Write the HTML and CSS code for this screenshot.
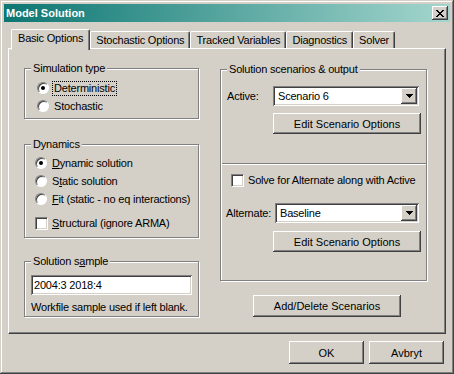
FILE: index.html
```html
<!DOCTYPE html>
<html>
<head>
    <title>Model Solution</title>
    <link rel="stylesheet" href="styles.css">
</head>
<body>
    <div class="window">
        <div class="titlebar">
            <span class="title">Model Solution</span>
            <span class="close">
                <svg width="8" height="7" viewBox="0 0 8 7" shape-rendering="crispEdges">
                    <path d="M0 0h2v1H0zM6 0h2v1H6zM1 1h2v1H1zM5 1h2v1H5zM2 2h4v1H2zM3 3h2v1H3zM2 4h4v1H2zM1 5h2v1H1zM5 5h2v1H5zM0 6h2v1H0zM6 6h2v1H6z" fill="#000"/>
                </svg>
            </span>
        </div>

        <div class="tabs">
            <div class="tab active">Basic Options</div>
            <div class="tab">Stochastic Options</div>
            <div class="tab">Tracked Variables</div>
            <div class="tab">Diagnostics</div>
            <div class="tab">Solver</div>
        </div>

        <div class="panel">
            <div class="col-left">
                <div class="group sim">
                    <span class="group-label">Simulation type</span>
                    <div class="opt"><span class="radio on"></span><span class="focus">Deterministic</span></div>
                    <div class="opt"><span class="radio"></span><span>Stochastic</span></div>
                </div>

                <div class="group dyn">
                    <span class="group-label">Dynamics</span>
                    <div class="opt"><span class="radio on"></span><span><u>D</u>ynamic solution</span></div>
                    <div class="opt"><span class="radio"></span><span>S<u>t</u>atic solution</span></div>
                    <div class="opt"><span class="radio"></span><span><u>F</u>it (static - no eq interactions)</span></div>
                    <div class="opt opt-check"><span class="check"></span><span><u>S</u>tructural (ignore ARMA)</span></div>
                </div>

                <div class="group sample">
                    <span class="group-label">Solution s<u>a</u>mple</span>
                    <div class="textbox">2004:3 2018:4</div>
                    <div class="hint">Workfile sample used if left blank.</div>
                </div>
            </div>

            <div class="col-right">
                <div class="group scen">
                    <span class="group-label">Solution scenarios &amp; output</span>
                    <div class="field-row active-row">
                        <span class="field-label">Active:</span>
                        <div class="combo">
                            <span class="combo-text">Scenario 6</span>
                            <span class="combo-arrow">
                                <svg width="7" height="4" viewBox="0 0 7 4" shape-rendering="crispEdges"><path d="M0 0h7v1H0zM1 1h5v1H1zM2 2h3v1H2zM3 3h1v1H3z" fill="#000"/></svg>
                            </span>
                        </div>
                    </div>
                    <button class="btn edit-btn first">Edit Scenario Options</button>

                    <div class="sep"></div>

                    <div class="check-row"><span class="check"></span><span>Solve for Alternate along with Active</span></div>

                    <div class="field-row alt-row">
                        <span class="field-label">Alternate:</span>
                        <div class="combo">
                            <span class="combo-text">Baseline</span>
                            <span class="combo-arrow">
                                <svg width="7" height="4" viewBox="0 0 7 4" shape-rendering="crispEdges"><path d="M0 0h7v1H0zM1 1h5v1H1zM2 2h3v1H2zM3 3h1v1H3z" fill="#000"/></svg>
                            </span>
                        </div>
                    </div>
                    <button class="btn edit-btn second">Edit Scenario Options</button>
                </div>

                <button class="btn add-btn">Add/Delete Scenarios</button>
            </div>
        </div>

        <div class="buttons">
            <button class="btn dlg-btn">OK</button>
            <button class="btn dlg-btn">Avbryt</button>
        </div>
    </div>
</body>
</html>
```

FILE: styles.css
```css
* {
    box-sizing: border-box;
}
body {
    margin: 0;
    background: #d4d0c8;
    font-family: "Liberation Sans", Arial, sans-serif;
    font-size: 11px;
    letter-spacing: -0.2px;
    color: #000;
}
.window {
    width: 454px;
    height: 374px;
    padding: 4px;
    background: #d4d0c8;
    box-shadow: inset -1px -1px #404040, inset 1px 1px #d4d0c8, inset -2px -2px #808080, inset 2px 2px #fff;
}

/* title bar */
.titlebar {
    height: 18px;
    display: flex;
    align-items: center;
    justify-content: space-between;
    padding: 0 2px;
    background: linear-gradient(to right, #0c7672, #a4d6ce);
    color: #fff;
    font-weight: bold;
    letter-spacing: 0;
}
.close {
    width: 16px;
    height: 14px;
    display: flex;
    align-items: center;
    justify-content: center;
    background: #d4d0c8;
    box-shadow: inset -1px -1px #404040, inset 1px 1px #fff, inset -2px -2px #808080;
}

/* tabs */
.tabs {
    display: flex;
    margin: 7px 4px 0;
    padding-left: 5px;
    height: 19px;
}
.tab {
    height: 17px;
    margin-top: 2px;
    padding: 2px 5px 0;
    line-height: 13px;
    background: #d4d0c8;
    border-top: 1px solid #fff;
    border-left: 1px solid #fff;
    border-right: 1px solid #404040;
    border-radius: 2px 2px 0 0;
    box-shadow: inset -1px 0 #808080;
    white-space: nowrap;
}
.tab.active {
    height: 21px;
    margin: 0 0 0 -2px;
    padding: 2px 6px 0;
    position: relative;
    z-index: 1;
}

/* panel */
.panel {
    margin: 0 4px;
    height: 286px;
    display: flex;
    padding: 19px 0 0 15px;
    border-top: 1px solid #fff;
    border-left: 1px solid #fff;
    border-right: 1px solid #404040;
    border-bottom: 1px solid #404040;
    box-shadow: inset -1px -1px #808080;
}
.col-left {
    width: 175px;
    display: flex;
    flex-direction: column;
}
.col-right {
    width: 207px;
    margin: 1px 0 0 21px;
    display: flex;
    flex-direction: column;
}

/* group boxes */
.group {
    position: relative;
    border: 1px solid #808080;
    box-shadow: 1px 1px 0 #fff, inset 1px 1px 0 #fff;
}
.group-label {
    position: absolute;
    top: -7px;
    left: 6px;
    padding: 0 2px;
    line-height: 13px;
    background: #d4d0c8;
    white-space: nowrap;
}
.sim {
    height: 51px;
    padding: 10px 0 0 12px;
}
.dyn {
    height: 94px;
    margin-top: 25px;
    padding: 9px 0 0 10px;
}
.sample {
    height: 56px;
    margin-top: 23px;
    padding: 13px 0 0 6px;
}
.scen {
    height: 212px;
    padding-top: 16px;
}

/* options */
.opt {
    display: flex;
    align-items: center;
    gap: 5px;
    height: 18px;
    white-space: nowrap;
}
.opt-check {
    margin-top: 6px;
    gap: 4px;
}
.radio {
    flex: none;
    position: relative;
    width: 12px;
    height: 12px;
    border-radius: 50%;
    background: #fff;
    border: 1px solid;
    border-color: #808080 #fff #fff #808080;
    box-shadow: inset 1px 1px #404040;
}
.radio.on::after {
    content: "";
    position: absolute;
    left: 3px;
    top: 3px;
    width: 4px;
    height: 4px;
    border-radius: 50%;
    background: #000;
}
.check {
    flex: none;
    width: 13px;
    height: 13px;
    background: #fff;
    border: 1px solid;
    border-color: #808080 #fff #fff #808080;
    box-shadow: inset 1px 1px #404040, inset -1px -1px #d4d0c8;
}
.focus {
    line-height: 13px;
    padding: 0 1px;
    margin-left: -1px;
    outline: 1px dotted #000;
}

/* text fields */
.textbox {
    width: 161px;
    height: 20px;
    padding: 2px 0 0 3px;
    line-height: 16px;
    background: #fff;
    box-shadow: inset 1px 1px #808080, inset -1px -1px #fff, inset 2px 2px #404040, inset -2px -2px #d4d0c8;
}
.hint {
    margin-top: 5px;
    line-height: 14px;
    white-space: nowrap;
}
.field-row {
    display: flex;
    align-items: center;
    height: 20px;
}
.active-row {
    padding-left: 6px;
}
.active-row .field-label {
    width: 46px;
}
.active-row .combo {
    width: 146px;
}
.alt-row {
    margin-top: 14px;
    padding-left: 5px;
}
.alt-row .field-label {
    width: 49px;
}
.alt-row .combo {
    width: 144px;
}
.combo {
    display: flex;
    height: 20px;
    padding: 2px;
    background: #fff;
    box-shadow: inset 1px 1px #808080, inset -1px -1px #fff, inset 2px 2px #404040, inset -2px -2px #d4d0c8;
}
.combo-text {
    flex: 1;
    padding-left: 3px;
    line-height: 16px;
}
.combo-arrow {
    width: 16px;
    height: 16px;
    display: flex;
    align-items: center;
    justify-content: center;
    background: #d4d0c8;
    box-shadow: inset -1px -1px #404040, inset 1px 1px #fff, inset -2px -2px #808080;
}

/* buttons */
.btn {
    display: flex;
    align-items: center;
    justify-content: center;
    padding: 0;
    border: none;
    font: inherit;
    color: #000;
    background: #d4d0c8;
    box-shadow: inset -1px -1px #404040, inset 1px 1px #fff, inset -2px -2px #808080;
}
.edit-btn {
    width: 148px;
    height: 21px;
    margin-left: 52px;
}
.edit-btn.first {
    margin-top: 7px;
}
.edit-btn.second {
    margin-top: 8px;
}
.add-btn {
    width: 148px;
    height: 22px;
    margin: 14px 0 0 33px;
}
.sep {
    height: 2px;
    margin: 29px 0 0 1px;
    border-top: 1px solid #808080;
    border-bottom: 1px solid #fff;
}
.check-row {
    display: flex;
    align-items: center;
    gap: 4px;
    height: 18px;
    margin-top: 6px;
    padding-left: 10px;
    white-space: nowrap;
}
.buttons {
    display: flex;
    justify-content: flex-end;
    gap: 5px;
    margin: 7px 6px 0 0;
}
.dlg-btn {
    width: 75px;
    height: 23px;
}
```
